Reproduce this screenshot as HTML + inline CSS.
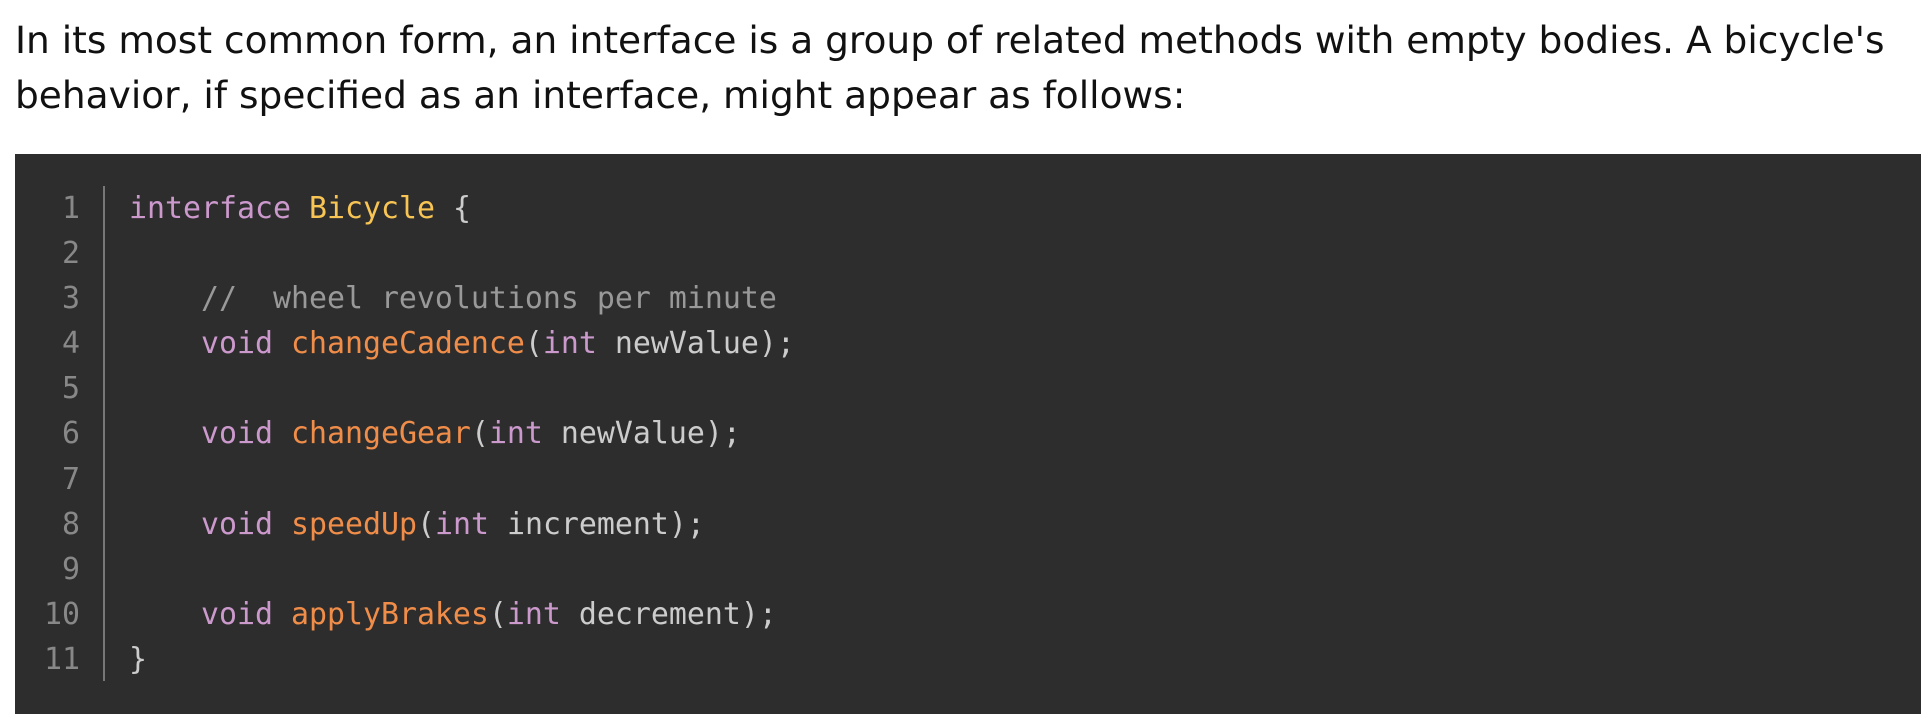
<!DOCTYPE html>
<html><head><meta charset="utf-8"><style>
html,body{margin:0;padding:0;background:#fff;width:1921px;height:697px;overflow:hidden}
p{position:absolute;left:15px;top:13px;margin:0;font-family:"DejaVu Sans","Liberation Sans",sans-serif;font-size:37.5px;line-height:55px;color:#111;width:1900px;white-space:nowrap}
.blk{position:absolute;left:15px;top:154px;width:1906px;height:560px;background:#2d2d2d}
.gut{position:absolute;left:103px;top:186px;width:2px;height:495px;background:#777}
pre{margin:0;position:absolute;top:186px;font-family:"DejaVu Sans Mono","Liberation Mono",monospace;font-size:29.9px;line-height:45.1px;color:#ccc}
.ln{left:0;width:80px;text-align:right;color:#888}
.code{left:129px}
.k{color:#cc99cd}.c{color:#f8c555}.f{color:#f08d49}.m{color:#999}
</style></head><body>
<p>In its most common form, an interface is a group of related methods with empty bodies. A bicycle's<br>behavior, if specified as an interface, might appear as follows:</p>
<div class="blk"></div>
<div class="gut"></div>
<pre class="ln">1
2
3
4
5
6
7
8
9
10
11</pre>
<pre class="code"><span class="k">interface</span> <span class="c">Bicycle</span> {

    <span class="m">//  wheel revolutions per minute</span>
    <span class="k">void</span> <span class="f">changeCadence</span>(<span class="k">int</span> newValue);

    <span class="k">void</span> <span class="f">changeGear</span>(<span class="k">int</span> newValue);

    <span class="k">void</span> <span class="f">speedUp</span>(<span class="k">int</span> increment);

    <span class="k">void</span> <span class="f">applyBrakes</span>(<span class="k">int</span> decrement);
}</pre>
</body></html>
